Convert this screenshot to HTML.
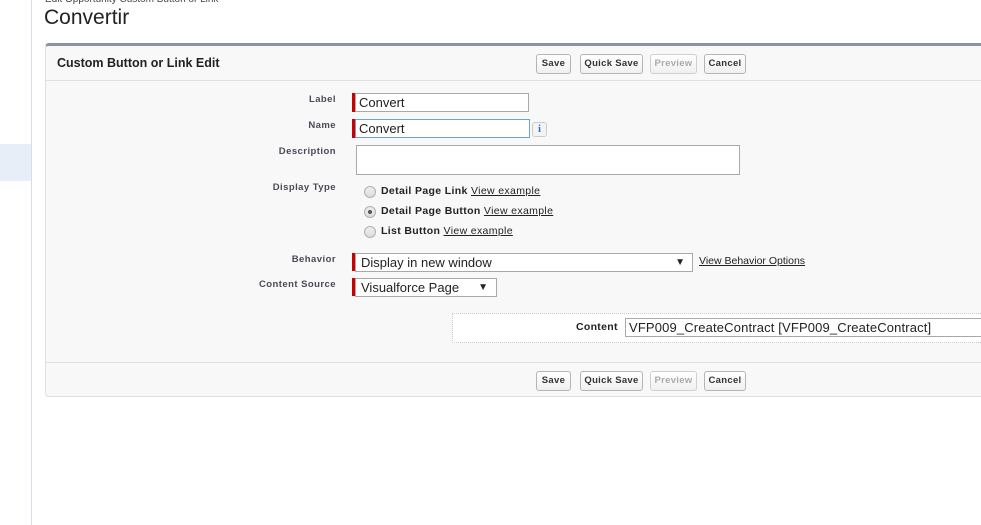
<!DOCTYPE html>
<html><head><style>
*{box-sizing:border-box;margin:0;padding:0}
body{width:981px;height:525px;background:#fff;font-family:"Liberation Sans",Arial,sans-serif;position:relative;overflow:hidden}
.a{position:absolute}
.lbl{position:absolute;right:645px;font-size:9.5px;font-weight:bold;color:#4a4a56;text-align:right;white-space:nowrap;letter-spacing:0.45px}
.btn{position:absolute;height:20px;border:1px solid #b5b5b5;border-radius:3px;background:linear-gradient(#fff,#f0f0f0);font-size:9.5px;font-weight:bold;color:#333;text-align:center;line-height:18px;letter-spacing:0.3px}
.dis{color:#aaa;border-color:#d0d0d0}
.req{position:absolute;width:3px;background:#c00}
.inp{position:absolute;border:1px solid #a9a9a9;background:#fff;font-size:13px;color:#222;padding-left:3px;line-height:17px;white-space:nowrap}
.rad{position:absolute;width:12px;height:12px;border-radius:50%;border:1px solid #b0b0b0;background:linear-gradient(#eee,#ddd)}
.rt{position:absolute;font-size:10.5px;font-weight:bold;color:#222;white-space:nowrap;letter-spacing:0.35px}
.rt u{font-weight:normal;color:#222}
</style></head><body>
<div class="a" style="left:31px;top:0;width:1px;height:525px;background:#d8dde6"></div>
<div class="a" style="left:0;top:144px;width:31px;height:37px;background:#e8eef7"></div>
<div class="a" style="left:45px;top:-6px;font-size:10px;color:#444">Edit Opportunity Custom Button or Link</div>
<div class="a" style="left:44px;top:6px;font-size:21px;color:#222">Convertir</div>
<div class="a" style="left:45px;top:43px;width:940px;height:354px;background:#f8f8f8;border-top:3px solid #8a93a6;border-left:1px solid #e0e0e0;border-bottom:1px solid #e0e0e0;border-radius:4px 0 0 4px"></div>
<div class="a" style="left:46px;top:80px;width:935px;height:1px;background:#e0e0e0"></div>
<div class="a" style="left:46px;top:362px;width:935px;height:1px;background:#e0e0e0"></div>
<div class="a" style="left:57px;top:56px;font-size:12.5px;font-weight:bold;color:#222">Custom Button or Link Edit</div>
<div class="btn" style="left:536px;top:54px;width:35px">Save</div>
<div class="btn" style="left:580px;top:54px;width:63px">Quick Save</div>
<div class="btn dis" style="left:650px;top:54px;width:47px">Preview</div>
<div class="btn" style="left:704px;top:54px;width:42px">Cancel</div>
<div class="btn" style="left:536px;top:371px;width:35px">Save</div>
<div class="btn" style="left:580px;top:371px;width:63px">Quick Save</div>
<div class="btn dis" style="left:650px;top:371px;width:47px">Preview</div>
<div class="btn" style="left:704px;top:371px;width:42px">Cancel</div>

<div class="lbl" style="top:94px">Label</div>
<div class="lbl" style="top:120px">Name</div>
<div class="lbl" style="top:146px">Description</div>
<div class="lbl" style="top:182px">Display Type</div>
<div class="lbl" style="top:254px">Behavior</div>
<div class="lbl" style="top:279px">Content Source</div>

<div class="req" style="left:352px;top:93px;height:19px"></div>
<div class="inp" style="left:355px;top:93px;width:174px;height:19px">Convert</div>
<div class="req" style="left:352px;top:119px;height:19px"></div>
<div class="inp" style="left:355px;top:119px;width:175px;height:19px;border-color:#6fa0d8">Convert</div>
<div class="a" style="left:532px;top:122px;width:15px;height:15px;border:1px solid #ccc;border-radius:3px;background:#f4f4f4;color:#2a6acb;font-size:10px;font-weight:bold;text-align:center;line-height:13px;font-family:'Liberation Serif',serif">i</div>
<div class="inp" style="left:356px;top:145px;width:384px;height:30px"></div>

<div class="rad" style="left:364px;top:186px"></div>
<div class="rt" style="left:381px;top:185px">Detail Page Link <u>View example</u></div>
<div class="rad" style="left:364px;top:206px"><div class="a" style="left:3px;top:3px;width:4px;height:4px;border-radius:50%;background:#555"></div></div>
<div class="rt" style="left:381px;top:205px">Detail Page Button <u>View example</u></div>
<div class="rad" style="left:364px;top:226px"></div>
<div class="rt" style="left:381px;top:225px">List Button <u>View example</u></div>

<div class="req" style="left:352px;top:253px;height:18px"></div>
<div class="inp" style="left:355px;top:253px;width:338px;height:19px;padding-left:5px">Display in new window<span class="a" style="right:7px;top:0;font-size:10px">▼</span></div>
<div class="a" style="left:699px;top:255px;font-size:10.5px;color:#222;text-decoration:underline">View Behavior Options</div>
<div class="req" style="left:352px;top:278px;height:18px"></div>
<div class="inp" style="left:355px;top:278px;width:142px;height:19px;padding-left:5px">Visualforce Page<span class="a" style="right:8px;top:0;font-size:10px">▼</span></div>

<div class="a" style="left:452px;top:313px;width:535px;height:30px;background:#fff;border:1px dotted #c8c8c8"></div>
<div class="a" style="left:576px;top:321px;font-size:10.5px;font-weight:bold;color:#222;letter-spacing:0.3px">Content</div>
<div class="inp" style="left:625px;top:318px;width:360px;height:19px;letter-spacing:0.15px">VFP009_CreateContract [VFP009_CreateContract]</div>
</body></html>
